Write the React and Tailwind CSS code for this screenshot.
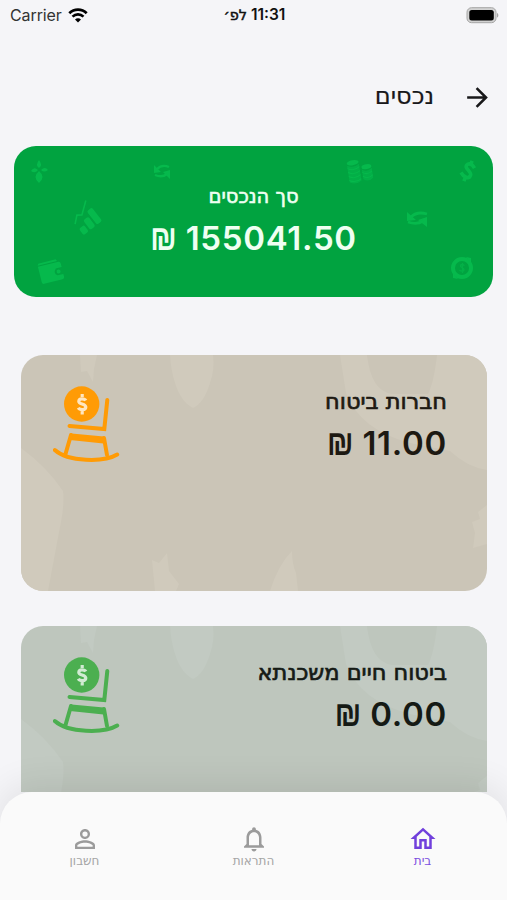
import { MdArrowForward, MdNotificationsNone, MdOutlineHome, MdPersonOutline } from "react-icons/md";

const assets = [
  {
    id: 1,
    title: "חברות ביטוח",
    amount: "11.00",
    card: "bg-[#cbc5b7] text-[#1d1912]",
    blob: "#d0cabc",
    icon: "#ff9b05",
  },
  {
    id: 2,
    title: "ביטוח חיים משכנתא",
    amount: "0.00",
    card: "bg-[#bec6bd] text-[#151a15]",
    blob: "#c2cac2",
    icon: "#4caf50",
  },
];

const tabs = [
  { label: "בית", Icon: MdOutlineHome, color: "text-[#7140dc]", text: "text-[#7c4ee0]" },
  { label: "התראות", Icon: MdNotificationsNone, color: "text-[#9b9b9b]", text: "text-[#a5a5a5]" },
  { label: "חשבון", Icon: MdPersonOutline, color: "text-[#9b9b9b]", text: "text-[#a5a5a5]" },
];

function StatusBar() {
  return (
    <div dir="ltr" className="grid h-[30px] grid-cols-3 items-center pr-2 pl-2.5 text-[#111]">
      <div className="flex items-center gap-[6px]">
        <span className="text-[16px] tracking-[-0.1px] text-[#333]">Carrier</span>
        <svg width="20" height="15" viewBox="0 0 20 15" fill="none" stroke="#000">
          <path d="M1.3 5.3C6.2.4 13.8.4 18.7 5.3" strokeWidth="2.7" />
          <path d="M4.5 8.6c3.1-3 7.9-3 11 0" strokeWidth="2.6" />
          <path d="M10 14.6 7 11.5c1.6-1.6 4.4-1.6 6 0z" fill="#000" stroke="none" />
        </svg>
      </div>
      <div dir="rtl" className="text-center font-['Inter','DejaVu_Sans',sans-serif] text-[15.5px] font-semibold whitespace-nowrap">
        <bdi>11:31</bdi>{" "}
        <span className="font-['DejaVu_Sans',sans-serif] text-[14.5px] font-normal [-webkit-text-stroke:0.5px_currentColor]">לפ׳</span>
      </div>
      <svg className="justify-self-end" width="33" height="17" viewBox="0 0 33 17">
        <rect x="1" y=".7" width="29" height="15" rx="4.5" fill="#d2d2d2" stroke="#a5a5a5" />
        <rect x="3.3" y="3" width="24.5" height="10.5" rx="2.5" fill="#000" />
        <path d="M31 6c1.8.6 1.8 4 0 4.6z" fill="#a5a5a5" />
      </svg>
    </div>
  );
}

function Amount({ value }) {
  return (
    <p dir="ltr" className="flex items-baseline gap-[9px] text-[33px] leading-[44px] font-semibold">
      <span className="inline-block origin-[50%_77%] scale-y-[1.14] font-['Liberation_Sans',sans-serif] text-[30px]">₪</span>
      <span className="tracking-[0.7px]">{value}</span>
    </p>
  );
}

// Faint finance drawings behind the total
function TotalPattern() {
  return (
    <svg className="absolute inset-0" width="479" height="151" viewBox="0 0 479 151" fill="#06b94c">
      {/* sparkle */}
      <path d="M25 14q4 5 0 8q-4-3 0-8zM25 25q7 6 0 12q-7-6 0-12zM17 25q3-5 7-1q-3 4-7 1zM27 24q4-4 7 0q-4 3-7 0z" />
      {/* swap arrows */}
      <path d="M393 66v9l9-1zM413 81v-10l-9 3z" />
      <path d="M397 71q6-6 16-3M409 75q-6 4-15 1" fill="none" stroke="#06b94c" strokeWidth="2.8" />
      <path d="M140 19v8l7-1zM156 33v-9l-7 2z" />
      <path d="M143 23q5-5 12-2M153 28q-5 4-12 1" fill="none" stroke="#06b94c" strokeWidth="2.4" />
      {/* bar chart */}
      <g transform="rotate(-38 71 73)">
        <rect x="60" y="77" width="6.5" height="8" rx="2" />
        <rect x="68.5" y="73" width="6.5" height="12" rx="2" />
        <rect x="77" y="68" width="6.5" height="17" rx="2" />
        <path d="M60 71l7-6 4 3 12-9" fill="none" stroke="#06b94c" strokeWidth="1.6" />
      </g>
      {/* wallet */}
      <g transform="rotate(-14 36 124)">
        <path d="M26 115h18l1 2H25z" />
        <path d="M25 118h21q2 0 2 2v4h-6q-4 4 0 7h6v3q0 2-2 2H27q-2 0-2-2z" />
        <circle cx="44" cy="127.5" r="2" />
      </g>
      {/* coins */}
      <g transform="rotate(-9 344 25)">
        <ellipse cx="340" cy="16" rx="6" ry="2.5" />
        <path d="M334 18q6 4 12 0v17q-6 4-12 0z" opacity=".55" />
        <path d="M334 21q6 4 12 0M334 25q6 4 12 0M334 29q6 4 12 0M334 33q6 4 12 0" fill="none" stroke="#06b94c" />
        <ellipse cx="353" cy="22" rx="5" ry="2.5" />
        <path d="M348 24q5 4 10 0v10q-5 4-10 0z" opacity=".55" />
        <path d="M348 27q5 4 10 0M348 31q5 4 10 0" fill="none" stroke="#06b94c" />
      </g>
      {/* dollar */}
      <g transform="rotate(22 454 25)" fill="none" stroke="#06b94c" strokeWidth="3.6">
        <path d="M459 20q-5-4-8-1c-3 5 7 5 7 9 0 5-6 4-10 1M454 14v4M454 31v5" />
      </g>
      {/* coin with arrows */}
      <circle cx="448" cy="122" r="9" fill="none" stroke="#06b94c" strokeWidth="4" />
      <path d="M452 111l5 1 0 5zM444 133l-5-1 0-5z" />
      <path d="M450.5 119.5q-3-2-4 0c-1 2 4 2 3.5 4.5-.5 1.5-3 1.5-4.5 0M448.5 117v10" fill="none" stroke="#06b94c" strokeOpacity=".6" strokeWidth="1.4" />
    </svg>
  );
}

function CardPattern({ color }) {
  return (
    <svg className="absolute inset-0" width="466" height="236" viewBox="0 0 466 236" fill={color}>
      <path d="M0 93Q26 112 42 136q2 14-4 41L27 236H0z" />
      <path d="M59 0h17l-3 14-1 13-6-11-6 1z" />
      <path d="M149 0h43q2 14-3 28-6 20-17 25-12-6-18-25-4-12-5-28z" />
      <path d="M131 205l7 3 8-10 2 18 10 13-3 7h-21z" />
      <path d="M249 236q8-26 22-40 0 13 4 22l2 18z" />
      <path d="M319 0h27q4 36 25 39h36q6-12 9-39h50v115q-20-3-37-19-20-4-40-8-50-13-64-50z" />
      <path d="M466 150l-9 7 2 7-8 3 3 11-2 15 14-4z" />
    </svg>
  );
}

function RockingChair({ color }) {
  return (
    <svg width="68" height="78" viewBox="0 0 68 78" fill="none" stroke={color} strokeLinecap="round" strokeLinejoin="round">
      <circle cx="28.7" cy="20" r="17.7" fill={color} stroke="none" />
      <path d="M32.8 16.5c-1-2-6.8-2.8-7 .8-.2 3.2 7 2 7 5.7 0 3.5-6 3.3-7.5.7M29.2 10v3M29.2 27v3.5" stroke="#fff" strokeOpacity=".75" strokeWidth="3.2" strokeLinecap="butt" />
      <path d="M54.3 16 51.3 45 16.5 42" strokeWidth="4" strokeLinejoin="miter" />
      <path d="M18.5 50.5 50.5 53.5 50.5 58.5 17 55z" fill={color} strokeWidth="2" />
      <path d="M18 51 12.5 70M51 54l3 17" strokeWidth="4" />
      <path d="M1.8 66C15 78 51 78.5 64.2 70.5" strokeWidth="4" />
    </svg>
  );
}

function AssetCard({ asset }) {
  return (
    <div className={`relative h-[236px] shrink-0 overflow-hidden rounded-[22px] ${asset.card}`}>
      <CardPattern color={asset.blob} />
      <div className="relative flex items-start justify-between pt-[29px] pr-10 pl-8">
        <div className="pt-[2px]">
          <h2 className="font-['DejaVu_Sans',sans-serif] text-[22.5px] leading-[30px] [-webkit-text-stroke:0.7px_currentColor]">{asset.title}</h2>
          <div className="mt-[5px] flex">
            <Amount value={asset.amount} />
          </div>
        </div>
        <RockingChair color={asset.icon} />
      </div>
    </div>
  );
}

export default function App() {
  return (
    <div dir="rtl" className="relative flex h-[900px] w-[507px] flex-col overflow-hidden bg-[#f5f5f8] font-['Inter','DejaVu_Sans',sans-serif]">
      <StatusBar />

      {/* Header */}
      <header className="flex h-[116px] items-center gap-[28px] pr-[14px] text-[#18181a]">
        <MdArrowForward className="mt-[19px] size-[31px]" />
        <h1 className="mt-4 font-['DejaVu_Sans',sans-serif] text-[24px] leading-8 [-webkit-text-stroke:0.2px_currentColor]">נכסים</h1>
      </header>

      {/* Total */}
      <section className="relative mx-3.5 flex h-[151px] shrink-0 flex-col items-center overflow-hidden rounded-[22px] bg-[#01a340] pt-[37px] text-[#effff2]">
        <TotalPattern />
        <h2 className="relative font-['DejaVu_Sans',sans-serif] text-[19.5px] leading-7 [-webkit-text-stroke:0.6px_currentColor]">סך הנכסים</h2>
        <div className="relative mt-[5px]">
          <Amount value="155041.50" />
        </div>
      </section>

      {/* Cards */}
      <main className="mr-[20px] ml-[21px] mt-[58px] flex flex-1 flex-col gap-[35px] overflow-hidden">
        {assets.map((asset) => (
          <AssetCard key={asset.id} asset={asset} />
        ))}
      </main>

      {/* Bottom tabs */}
      <nav className="relative grid h-[108px] shrink-0 grid-cols-3 rounded-t-[32px] bg-[#fafafa] pt-8 shadow-[0_-6px_36px_rgba(0,0,0,0.09)]">
        {tabs.map(({ label, Icon, color, text }) => (
          <div key={label} className="flex flex-col items-center">
            <Icon className={`size-[30px] ${color}`} />
            <span className={`font-['DejaVu_Sans',sans-serif] text-[12px] leading-[14px] ${text}`}>{label}</span>
          </div>
        ))}
      </nav>
    </div>
  );
}
